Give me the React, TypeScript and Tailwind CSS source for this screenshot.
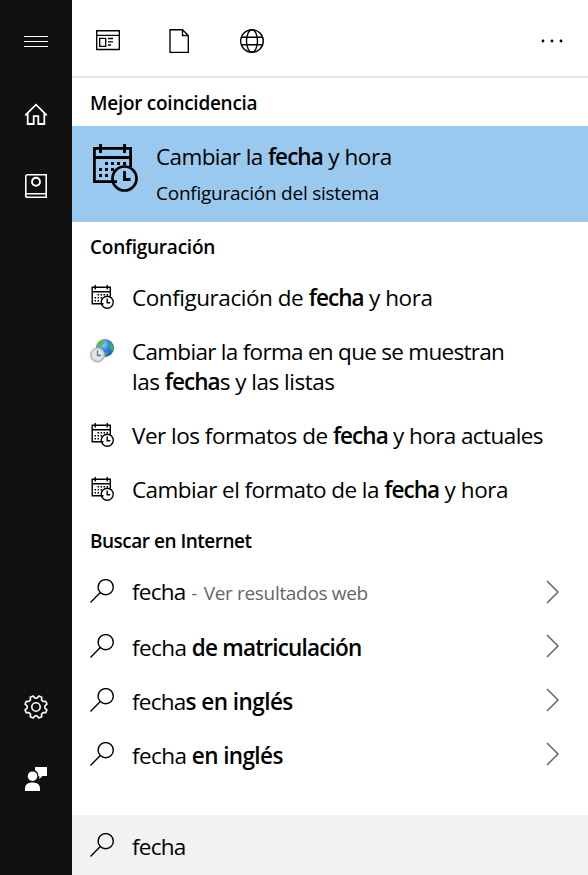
import React from 'react';

type Part = { text: string; bold?: boolean; className?: string };

const CalendarClock = ({ className }: { className: string }) => (
  <svg viewBox="0 0 46 48" className={className} fill="none" stroke="#000">
    <path d="M25 37.6H2.4V4.4H38.6V23" strokeWidth="2.8" />
    <path d="M2 13.5H39M8.5 0V9M32.5 0V9" strokeWidth="2.8" />
    <path
      d="M13 19.5h3m3 0h3m3 0h3m3 0h3M7 25.5h3m3 0h3m3 0h3M7 31.5h3m3 0h3"
      strokeWidth="3"
    />
    <circle cx="32.5" cy="34.5" r="12" strokeWidth="2.7" />
    <path d="M32.5 27V35.5H38.5" strokeWidth="2.8" />
  </svg>
);

const RegionIcon = () => (
  <svg viewBox="0 0 24 24" className="h-6 w-6 shrink-0">
    <defs>
      <radialGradient id="sea" cx="0.4" cy="0.3" r="0.75">
        <stop offset="0" stopColor="#8fd0fb" />
        <stop offset="0.5" stopColor="#2f7fe0" />
        <stop offset="1" stopColor="#1d57c0" />
      </radialGradient>
      <linearGradient id="dial" x1="0" y1="0" x2="0" y2="1">
        <stop offset="0" stopColor="#d3dbdf" />
        <stop offset="1" stopColor="#b4bfc4" />
      </linearGradient>
    </defs>
    <circle cx="15" cy="9" r="9" fill="url(#sea)" />
    <path d="M7 5c2-4 6-5 9-4l-2 3-2 3-3 2-2 1z" fill="#5fba55" />
    <path d="M20 3c3 2 4 5 3.500 8l-2 1-2-4 1-2z" fill="#46ad49" />
    <path d="M14 13l4 0-1 3-3 1z" fill="#3fa95c" />
    <circle cx="7.500" cy="16" r="7.200" fill="url(#dial)" stroke="#a3aeb3" strokeWidth="0.8" />
    <circle cx="7.500" cy="16" r="5.400" fill="#e1e7e9" />
    <path d="M7.500 11.500V16.500H11" fill="none" stroke="#65757d" strokeWidth="1.300" />
  </svg>
);

const SearchIcon = () => (
  <svg viewBox="0 0 24 24" className="h-6 w-6 shrink-0" fill="none" stroke="#000" strokeWidth="1.4">
    <circle cx="15.700" cy="8.200" r="7.600" />
    <path d="M10.300 13.600L0.400 23.500" />
  </svg>
);

const Chevron = ({ className }: { className: string }) => (
  <svg viewBox="0 0 14 24" className={`h-6 w-3.5 shrink-0 ${className}`} fill="none" stroke="#666" strokeWidth="1.5">
    <path d="M1 1L12 12L1 23" />
  </svg>
);

const Sidebar = () => (
  <nav className="flex w-[72px] shrink-0 flex-col items-center bg-[#101010] text-white">
    <svg viewBox="0 0 24 24" className="mt-[29px] h-6 w-6" fill="none" stroke="currentColor">
      <path d="M0 7.500H24M0 12.500H24M0 17.500H24" />
    </svg>
    <svg viewBox="0 0 24 24" className="mt-[49px] h-6 w-6" fill="none" stroke="currentColor" strokeWidth="1.8">
      <path d="M1.200 13.300L12 2.700L22.800 13.300M3.700 11V22H9.700V14.200H14.300V22H20.300V11" />
    </svg>
    <svg viewBox="0 0 24 24" className="mt-12 h-6 w-6" fill="none" stroke="currentColor" strokeWidth="1.6">
      <path d="M22.200 19.700H3.500C1 19.700 1 23.200 3.500 23.200H22.200V0.800H3.500Q1.800 0.800 1.800 2.500V21.500" />
      <circle cx="12" cy="7.800" r="4" strokeWidth="1.9" />
    </svg>
    <svg viewBox="0 0 24 24" className="mt-[497px] h-6 w-6" fill="none" stroke="currentColor" strokeWidth="1.6">
      <path
        strokeLinejoin="round"
        transform="rotate(22.500 12 12)"
        d="M9.700 3.300L10.400 0.800H13.600L14.300 3.300L16.500 4.200L18.800 2.950L21.050 5.200L19.800 7.500L20.700 9.700L23.200 10.400V13.600L20.700 14.300L19.800 16.500L21.050 18.800L18.800 21.050L16.500 19.800L14.300 20.700L13.600 23.200H10.400L9.700 20.700L7.500 19.800L5.200 21.050L2.950 18.800L4.200 16.500L3.300 14.300L0.800 13.600V10.400L3.300 9.700L4.200 7.500L2.950 5.200L5.200 2.950L7.500 4.200Z"
      />
      <circle cx="12" cy="12" r="4.200" />
    </svg>
    <svg viewBox="0 0 24 24" className="mt-12 h-6 w-6" fill="currentColor">
      <circle cx="8.500" cy="9.200" r="4.800" />
      <path d="M1 24V21.500C1 17.500 4 15.500 8.500 15.500S16 17.500 16 21.500V24Z" />
      <path d="M11 0H23V9H18.500L15.300 12V9H14.300C14.500 6.500 13.500 4.500 11 3.200Z" />
    </svg>
  </nav>
);

const FilterBar = () => (
  <header className="flex h-[78px] items-center border-b-2 border-[#e6e6e6] pr-[24px] pl-6 pt-[6px]">
    <svg viewBox="0 0 24 24" className="h-6 w-6" fill="none" stroke="#000" strokeWidth="1.35">
      <path d="M0.700 1.700H23.300V20.500H0.700ZM0.700 6.300H23.300" />
      <path d="M3.700 9.300H9.700V17.300H3.700ZM12 9.500H17M12 12.800H17M12 16H15" />
    </svg>
    <svg viewBox="0 0 24 24" className="ml-12 h-6 w-6" fill="none" stroke="#000" strokeWidth="1.35">
      <path d="M2 0.700H14.500L20.300 6.500V23.300H2ZM14.500 0.700V6.500H20.300" />
    </svg>
    <svg viewBox="0 0 24 24" className="ml-12 h-6 w-6" fill="none" stroke="#000" strokeWidth="1.4">
      <circle cx="12" cy="12" r="11.300" />
      <ellipse cx="12" cy="12" rx="5.500" ry="11.300" />
      <path d="M1.500 8.300H22.500M1.500 15.700H22.500" />
    </svg>
    <svg viewBox="0 0 24 4" className="ml-auto h-1 w-6" fill="#000">
      <circle cx="3" cy="2" r="1.400" />
      <circle cx="12" cy="2" r="1.400" />
      <circle cx="21" cy="2" r="1.400" />
    </svg>
  </header>
);

const SectionTitle = ({ children, className }: { children: string; className: string }) => (
  <h2 className={`h-12 pl-[18px] pt-[10px] text-[19px] leading-[30px] font-semibold ${className}`}>{children}</h2>
);

const Label = ({ parts }: { parts: Part[] }) => (
  <>
    {parts.map((p, i) => (
      <span key={i} className={`${p.bold ? 'font-semibold' : ''} ${p.className ?? ''}`}>
        {p.text}
      </span>
    ))}
  </>
);

const fecha: Part = { text: 'fecha', bold: true, className: 'tracking-[-0.95px]' };
const yHora: Part = { text: ' y hora', className: 'tracking-[-0.43px]' };

const settings: Part[][][] = [
  [[{ text: 'Configuración de ', className: 'tracking-[-0.45px]' }, fecha, yHora]],
  [
    [{ text: 'Cambiar la forma en que se muestran', className: 'tracking-[-0.71px]' }],
    [
      { text: 'las ', className: 'tracking-[-0.5px]' },
      fecha,
      { text: 's y las listas', className: 'tracking-[-0.5px]' },
    ],
  ],
  [
    [
      { text: 'Ver los formatos de ', className: 'tracking-[-0.5px]' },
      fecha,
      { text: ' y hora actuales', className: 'tracking-[-0.58px]' },
    ],
  ],
  [[{ text: 'Cambiar el formato de la ', className: 'tracking-[-0.55px]' }, fecha, yHora]],
];

const searches: Part[][] = [
  [
    { text: 'fecha', className: 'tracking-[-0.75px]' },
    { text: ' - ', className: 'text-[19px] tracking-[0.7px] text-[#666]' },
    { text: 'Ver resultados web', className: 'text-[19px] tracking-[-0.32px] text-[#666]' },
  ],
  [
    { text: 'fecha ', className: 'tracking-[-0.55px]' },
    { text: 'de matriculación', bold: true, className: 'tracking-[-0.8px]' },
  ],
  [
    { text: 'fecha', className: 'tracking-[-0.75px]' },
    { text: 's en inglés', bold: true, className: 'tracking-[-0.54px]' },
  ],
  [
    { text: 'fecha ', className: 'tracking-[-0.55px]' },
    { text: 'en inglés', bold: true, className: 'tracking-[-0.6px]' },
  ],
];

const App: React.FC = () => {
  return (
    <div className="flex h-[875px] w-[588px] overflow-hidden bg-white font-['Open_Sans','Noto_Sans',sans-serif] text-[22.5px] leading-[30px] whitespace-pre text-black">
      <Sidebar />
      <main className="flex min-w-0 flex-1 flex-col">
        <FilterBar />
        <SectionTitle className="tracking-[-0.27px]">Mejor coincidencia</SectionTitle>
        <div className="flex h-24 bg-[#9ac9ef] pl-5 pt-4">
          <CalendarClock className="mt-[2px] h-12 w-[46px] shrink-0" />
          <div className="ml-[18px]">
            <div>
              <Label parts={[{ text: 'Cambiar la ', className: 'tracking-[-0.6px]' }, fecha, yHora]} />
            </div>
            <div className="mt-[6px] text-[19px] tracking-[-0.24px]">Configuración del sistema</div>
          </div>
        </div>

        <SectionTitle className="tracking-[-0.23px]">Configuración</SectionTitle>
        <ul className="mt-px">
          {settings.map((lines, i) => (
            <li key={i} className="flex py-3 pl-[18px]">
              {i === 1 ? (
                <div className="mt-[2px] w-[42px]">
                  <RegionIcon />
                </div>
              ) : (
                <div className="mt-[2px] w-[42px] pl-[0.5px]">
                  <CalendarClock className="h-6 w-[23px]" />
                </div>
              )}
              <div>
                {lines.map((parts, j) => (
                  <div key={j}>
                    <Label parts={parts} />
                  </div>
                ))}
              </div>
            </li>
          ))}
        </ul>

        <SectionTitle className="-mt-px tracking-[-0.5px]">Buscar en Internet</SectionTitle>
        <ul className="mt-px">
          {searches.map((parts, i) => (
            <li key={i} className={`flex pl-[18px] pr-7 ${i === 0 ? 'h-[57px] pt-[14px]' : 'h-[54px] pt-3'}`}>
              <SearchIcon />
              <div className={`ml-[18px] flex-1 ${i === 0 ? '-mt-[2px]' : '-mt-px'}`}>
                <Label parts={parts} />
              </div>
              <Chevron className={i === 0 ? 'mt-px' : ''} />
            </li>
          ))}
        </ul>

        <div className="mt-auto flex h-[60px] bg-[#f2f2f2] pl-[18px] pt-[18px]">
          <SearchIcon />
          <div className="-mt-px ml-[18px] tracking-[-0.75px]">fecha</div>
        </div>
      </main>
    </div>
  );
};

export default App;
